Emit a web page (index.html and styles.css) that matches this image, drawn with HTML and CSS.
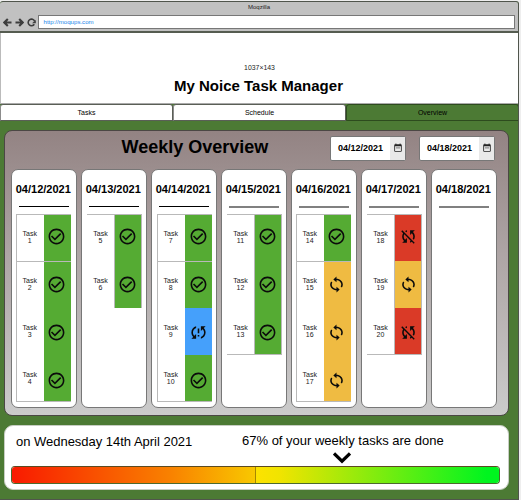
FILE: index.html
```html
<!DOCTYPE html>
<html lang="en">
<head>
<meta charset="utf-8">
<title>My Noice Task Manager</title>
<link rel="stylesheet" href="styles.css">
</head>
<body>
<svg class="defs" aria-hidden="true">
  <symbol id="done" viewBox="0 0 24 24"><path d="M16.59 7.58L10 14.17l-3.59-3.58L5 12l5 5 8-8zM12 2C6.48 2 2 6.48 2 12s4.48 10 10 10 10-4.48 10-10S17.52 2 12 2zm0 18c-4.42 0-8-3.58-8-8s3.58-8 8-8 8 3.58 8 8-3.58 8-8 8z"/></symbol>
  <symbol id="sync" viewBox="0 0 24 24"><path transform="matrix(1 0 0 .92 0 .96)" d="M12 4V1L8 5l4 4V6c3.31 0 6 2.69 6 6 0 1.01-.25 1.97-.7 2.8l1.46 1.46C19.54 15.03 20 13.57 20 12c0-4.42-3.58-8-8-8zm0 14c-3.31 0-6-2.69-6-6 0-1.01.25-1.97.7-2.8L5.24 7.74C4.46 8.97 4 10.43 4 12c0 4.42 3.58 8 8 8v3l4-4-4-4v3z"/></symbol>
  <symbol id="problem" viewBox="0 0 24 24"><path d="M3 12c0 2.21.91 4.2 2.36 5.64L3 20h6v-6l-2.24 2.24C5.68 15.15 5 13.66 5 12c0-2.61 1.67-4.83 4-5.65V4.26C5.55 5.15 3 8.27 3 12zm8 5h2v-2h-2v2zM21 4h-6v6l2.24-2.24C18.32 8.85 19 10.34 19 12c0 2.61-1.67 4.83-4 5.65v2.09c3.45-.89 6-4.01 6-7.74 0-2.21-.91-4.2-2.36-5.64L21 4zm-10 9h2V7h-2v6z"/></symbol>
  <symbol id="off" viewBox="0 0 24 24"><path d="M10 6.35V4.26c-.8.21-1.55.54-2.23.96l1.46 1.46c.25-.12.5-.24.77-.33zm-7.14-.94l2.36 2.36C4.45 8.99 4 10.44 4 12c0 2.21.91 4.2 2.36 5.64L4 20h6v-6l-2.24 2.24C6.68 15.15 6 13.66 6 12c0-1 .25-1.94.68-2.77l8.08 8.08c-.25.13-.5.25-.77.34v2.09c.8-.21 1.55-.54 2.23-.96l2.36 2.36 1.27-1.27L4.14 4.14 2.86 5.41zM20 4h-6v6l2.24-2.24C17.32 8.85 18 10.34 18 12c0 1-.25 1.94-.68 2.77l1.46 1.46C19.55 15.01 20 13.56 20 12c0-2.21-.91-4.2-2.36-5.64L20 4z"/></symbol>
  <symbol id="calendar" viewBox="0 0 24 24"><path d="M19 3h-1V1h-2v2H8V1H6v2H5c-1.11 0-2 .9-2 2v14c0 1.1.9 2 2 2h14c1.1 0 2-.9 2-2V5c0-1.1-.9-2-2-2zm0 16H5V8h14v11z"/><path d="M7 10h10v3H7z" opacity=".45"/></symbol>
</svg>
<div class="window">
  <div class="chrome">
    <div class="caption">Moqzilla</div>
    <div class="toolbar">
      <svg class="nav" viewBox="0 0 9 9"><path d="M8.5 4.5H1.5M4.8 1L1.3 4.5 4.8 8"/></svg>
      <svg class="nav" viewBox="0 0 9 9"><path d="M.5 4.5H7.5M4.2 1L7.7 4.5 4.2 8"/></svg>
      <svg class="nav reload" viewBox="0 0 9 9"><path d="M7.3 6.2A3.3 3.3 0 1 1 7.6 3.3"/><path class="tip" d="M8.8 2v3.2H5z"/></svg>
      <div class="url">http://moqups.com</div>
    </div>
  </div>
  <header class="header">
    <div class="size">1037×143</div>
    <h1>My Noice Task Manager</h1>
  </header>
  <nav class="tabs">
    <div class="tab">Tasks</div>
    <div class="tab">Schedule</div>
    <div class="tab active">Overview</div>
  </nav>
  <main>
    <section class="panel">
      <div class="panel-head">
        <h2>Weekly Overview</h2>
        <div class="date-input"><span>04/12/2021</span><i><svg><use href="#calendar"/></svg></i></div>
        <div class="date-input"><span>04/18/2021</span><i><svg><use href="#calendar"/></svg></i></div>
      </div>
      <div class="week">
        <div class="day">
          <h3>04/12/2021</h3>
          <div class="list boxed">
            <div class="row green"><span>Task<br>1</span><b><svg><use href="#done"/></svg></b></div>
            <div class="row green"><span>Task<br>2</span><b><svg><use href="#done"/></svg></b></div>
            <div class="row green"><span>Task<br>3</span><b><svg><use href="#done"/></svg></b></div>
            <div class="row green"><span>Task<br>4</span><b><svg><use href="#done"/></svg></b></div>
          </div>
        </div>
        <div class="day">
          <h3>04/13/2021</h3>
          <div class="list open">
            <div class="row green"><span>Task<br>5</span><b><svg><use href="#done"/></svg></b></div>
            <div class="row green"><span>Task<br>6</span><b><svg><use href="#done"/></svg></b></div>
          </div>
        </div>
        <div class="day">
          <h3>04/14/2021</h3>
          <div class="list boxed inset">
            <div class="row green"><span>Task<br>7</span><b><svg><use href="#done"/></svg></b></div>
            <div class="row green"><span>Task<br>8</span><b><svg><use href="#done"/></svg></b></div>
            <div class="row blue"><span>Task<br>9</span><b><svg><use href="#problem"/></svg></b></div>
            <div class="row green"><span>Task<br>10</span><b><svg><use href="#done"/></svg></b></div>
          </div>
        </div>
        <div class="day future">
          <h3>04/15/2021</h3>
          <div class="list open closed">
            <div class="row green"><span>Task<br>11</span><b><svg><use href="#done"/></svg></b></div>
            <div class="row green"><span>Task<br>12</span><b><svg><use href="#done"/></svg></b></div>
            <div class="row green"><span>Task<br>13</span><b><svg><use href="#done"/></svg></b></div>
          </div>
        </div>
        <div class="day future">
          <h3>04/16/2021</h3>
          <div class="list boxed">
            <div class="row green"><span>Task<br>14</span><b><svg><use href="#done"/></svg></b></div>
            <div class="row amber"><span>Task<br>15</span><b><svg><use href="#sync"/></svg></b></div>
            <div class="row amber"><span>Task<br>16</span><b><svg><use href="#sync"/></svg></b></div>
            <div class="row amber"><span>Task<br>17</span><b><svg><use href="#sync"/></svg></b></div>
          </div>
        </div>
        <div class="day future">
          <h3>04/17/2021</h3>
          <div class="list open closed shifted">
            <div class="row red"><span>Task<br>18</span><b><svg><use href="#off"/></svg></b></div>
            <div class="row amber"><span>Task<br>19</span><b><svg><use href="#sync"/></svg></b></div>
            <div class="row red"><span>Task<br>20</span><b><svg><use href="#off"/></svg></b></div>
          </div>
        </div>
        <div class="day future">
          <h3>04/18/2021</h3>
        </div>
      </div>
    </section>
    <section class="summary">
      <div class="summary-text">
        <p class="today">on Wednesday 14th April 2021</p>
        <p class="percent">67% of your weekly tasks are done</p>
      </div>
      <svg class="marker" viewBox="0 0 18 12"><path d="M1 1.5L9 9.2l8-7.7"/></svg>
      <div class="bar"><div class="first"></div><div class="second"></div></div>
    </section>
  </main>
</div>
</body>
</html>
```
FILE: styles.css
```css
* { box-sizing: border-box; }
body {
  margin: 0;
  height: 500px;
  padding-top: 1px;
  background: #eee;
  font-family: "Liberation Sans", Arial, sans-serif;
  color: #000;
  overflow: hidden;
}
h1, h2, h3, p { margin: 0; }
.defs { display: none; }
.window {
  width: 519px;
  height: 499px;
  border: solid #50554c;
  border-width: 1px 1px 1px 0;
  border-radius: 3px 3px 0 0;
  background: #4c7a34;
  overflow: hidden;
}
.chrome {
  height: 31px;
  background: #c1c1c1;
  border-bottom: 2px solid #555c50;
}
.caption {
  height: 13px;
  line-height: 11px;
  font-size: 6px;
  text-align: center;
  color: #222;
}
.toolbar { display: flex; align-items: center; padding-left: 3px; }
.nav { width: 9px; height: 9px; margin-right: 3px; fill: none; stroke: #3d3d3d; stroke-width: 2.1; }
.reload { margin-right: 2px; stroke-width: 1.6; }
.nav .tip { fill: #3d3d3d; stroke: none; }
.url {
  flex: 1;
  height: 14px;
  margin-right: 3px;
  padding-left: 4.5px;
  border: 1px solid #777;
  background: #fff;
  font-size: 6.1px;
  line-height: 12px;
  color: #2286ea;
}
.header {
  height: 71px;
  padding: 31px 2px 0 0;
  border-left: 1px solid #bbb;
  border-bottom: 1px solid #aaa;
  background: #fff;
  text-align: center;
}
.size { font-size: 6.9px; line-height: 8px; color: #222; padding-left: 2px; }
h1 { font-size: 15px; line-height: 18px; margin-top: 5px; }
.tabs { display: grid; grid-template-columns: 173px 173px 173px; height: 17px; }
.tab {
  border: 1px solid #5a5f56;
  border-left-color: #8c8c8c;
  border-radius: 3px 3px 0 0;
  background: #fff;
  font-size: 7px;
  line-height: 15px;
  text-align: center;
}
.tab.active { background: #4c7a34; border-color: #2d4b1e; }
main { padding: 9px 0 0 4px; }
.panel {
  width: 505px;
  height: 286px;
  padding: 5px 0 0 6px;
  border: 1px solid #4b4744;
  border-radius: 8px;
  background: linear-gradient(#938383, #ada4a4 42%, #cbcbcb);
}
.panel-head { display: flex; height: 33px; }
h2 { width: 319px; padding-left: 110.5px; font-size: 18px; line-height: 22px; white-space: nowrap; }
.date-input {
  display: flex;
  width: 76px;
  height: 25px;
  margin-right: 13px;
  border: 1px solid #777;
  border-radius: 2px;
  background: #fff;
  font-size: 9px;
  font-weight: bold;
  line-height: 22px;
}
.date-input span { width: 59px; padding-left: 7px; }
.date-input i { flex: 1; display: flex; align-items: center; justify-content: center; padding-bottom: 1px; background: #e9e9e9; }
.date-input svg { width: 10px; height: 10px; fill: #222; }
.week { display: grid; grid-template-columns: repeat(7, 65.5px); gap: 4.5px; }
.day { height: 239px; border: 1px solid #777; border-radius: 7px; background: #fff; }
h3 {
  height: 36.5px;
  margin: 0 7px;
  padding-right: 1px;
  border-bottom: 1px solid #000;
  display: flex;
  justify-content: center;
  font-size: 11px;
  line-height: 38px;
  white-space: nowrap;
}
.future h3 { height: 37.5px; border-bottom: 2px solid #808080; }
.list { margin: 7.5px 0 0 4px; width: 55px; border-top: 1px solid #b9b9b9; }
.future .list { margin-top: 6.5px; }
.row { display: flex; height: 47px; }
.row:first-child { height: 46px; }
.row span {
  flex: 1;
  padding: 16px 1.5px 0 0;
  font-size: 7px;
  line-height: 7.3px;
  text-align: center;
  color: #222;
}
.row:first-child span { padding-top: 15px; }
.row b { width: 27px; padding-right: 1.5px; display: flex; align-items: center; justify-content: center; }
.row svg { width: 19px; height: 19px; flex: none; fill: #0b0b0b; }
.row:nth-child(1) svg { margin-bottom: 3px; }
.row:nth-child(2) svg { margin-bottom: 1px; }
.row:nth-child(3) svg { margin-top: 2px; }
.row:nth-child(4) svg { margin-top: 5px; }
.green b { background: #55ab33; }
.blue b { background: #45a0fb; }
.amber b { background: #efbb42; }
.red b { background: #da3a27; }
.boxed { border-left: 1px solid #b9b9b9; border-bottom: 1px solid #b9b9b9; }
.boxed .row:nth-child(2) { border-top: 1px solid #b9b9b9; }
.boxed .row:nth-child(2) span { padding-top: 15px; }
.boxed .row:last-child { height: 46px; }
.inset { margin-left: 5px; }
.inset b { padding-right: 0; }
.open { margin-left: 5px; }
.open .row span { padding-right: 0; }
.open .row b { border: solid #b9b9b9; border-width: 0 1px; width: 28px; }
.closed { border-bottom: 1px solid #b9b9b9; }
.closed .row:last-child { height: 46px; }
.closed .row:last-child svg { margin-top: 3px; }
.future .shifted { margin-left: 5px; }
.shifted b { padding-right: 0; }
.summary {
  width: 505px;
  height: 65px;
  margin-top: 9px;
  padding: 6px 0 0 6px;
  border: 1px solid #c7cdc3;
  border-radius: 9px;
  background: #fff;
}
.summary-text { display: flex; height: 20px; white-space: nowrap; }
.today { width: 226px; padding-left: 5px; font-size: 13px; line-height: 19px; letter-spacing: -.02px; }
.percent { padding-left: 5px; font-size: 13px; line-height: 17px; }
.marker { display: block; width: 18px; height: 12px; margin-left: 322px; fill: none; stroke: #000; stroke-width: 3.2; }
.bar {
  display: flex;
  width: 489px;
  height: 18px;
  margin-top: 2px;
  border: 1px solid #4c6a2d;
  border-top-color: #5c4a20;
  border-radius: 4px;
  overflow: hidden;
}
.first { width: 244px; border-right: 1px solid #a68700; background: linear-gradient(90deg, #f91a00, #f98300 66%, #f8c800); }
.second { flex: 1; background: linear-gradient(90deg, #fde200, #f0e400 10%, #00f51f 95%); }
```
